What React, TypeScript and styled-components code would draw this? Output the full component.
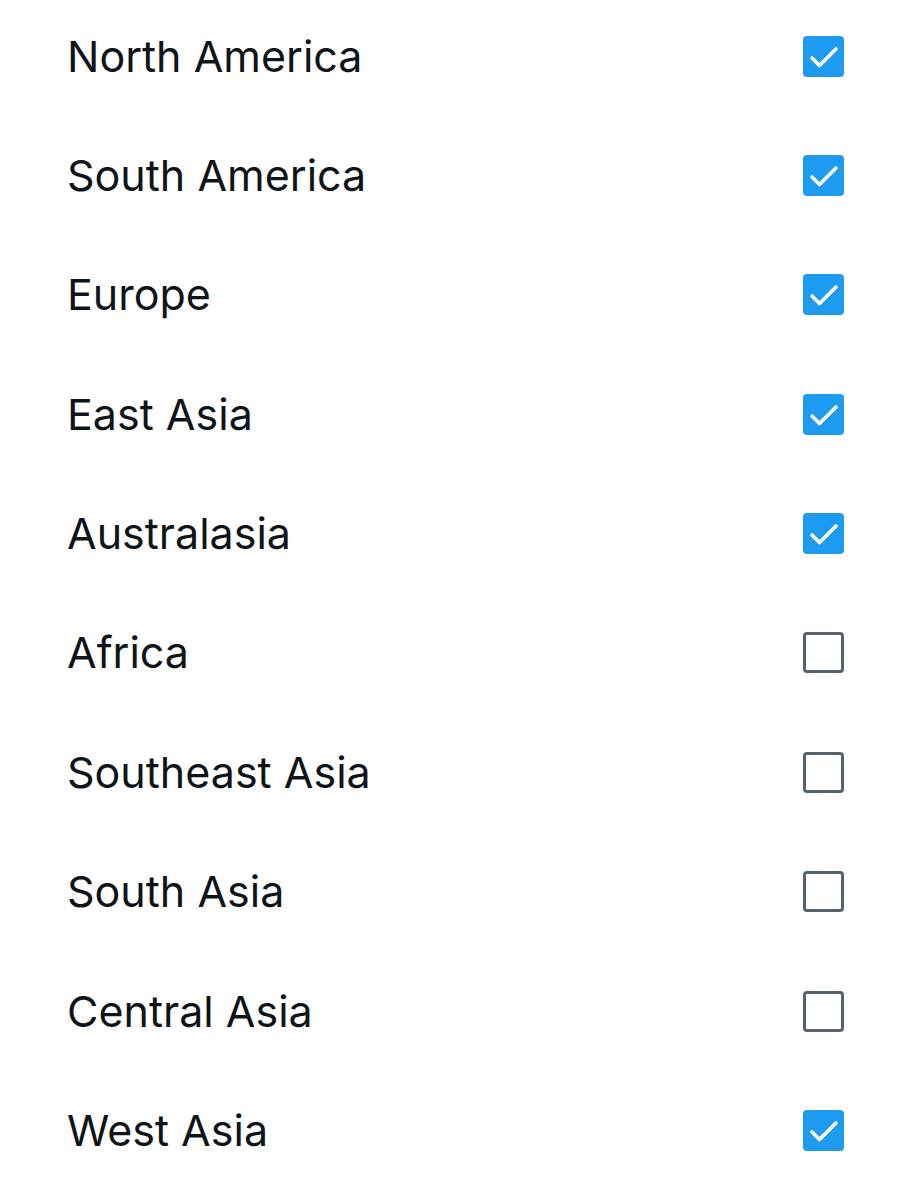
import styled, { createGlobalStyle } from "styled-components";

const regions = [
	{ name: "North America", checked: true },
	{ name: "South America", checked: true },
	{ name: "Europe", checked: true },
	{ name: "East Asia", checked: true },
	{ name: "Australasia", checked: true },
	{ name: "Africa", checked: false },
	{ name: "Southeast Asia", checked: false },
	{ name: "South Asia", checked: false },
	{ name: "Central Asia", checked: false },
	{ name: "West Asia", checked: true },
];

const GlobalStyle = createGlobalStyle`
	body {
		margin: 0;
		background: #ffffff;
		font-family: Inter, "Noto Sans", sans-serif;
		overflow: hidden;
	}
`;

const List = styled.ul`
	list-style: none;
	margin: -3.7px 0 0;
	padding: 0 69px 0 67px;
`;

const Row = styled.li`
	height: 119.4px;
	display: flex;
	align-items: center;
	justify-content: space-between;
`;

const Label = styled.span`
	font-size: 43px;
	color: #0f1419;
	line-height: 1;
`;

const Box = styled.span<{ $checked: boolean }>`
	width: 41px;
	height: 41px;
	box-sizing: border-box;
	border-radius: 4px;
	display: flex;
	align-items: center;
	justify-content: center;
	background: ${({ $checked }) => ($checked ? "#1d9bf0" : "transparent")};
	border: ${({ $checked }) => ($checked ? "none" : "3px solid #536471")};
`;

const Check = () => (
	<svg width="41" height="41" viewBox="0 0 41 41" fill="none">
		<path
			d="M9 22L16.5 29.5L33 13"
			stroke="#ffffff"
			strokeWidth="3.6"
			strokeLinecap="round"
			strokeLinejoin="round"
		/>
	</svg>
);

const App = () => {
	return (
		<>
			<GlobalStyle />
			<List>
				{regions.map((r) => (
					<Row key={r.name}>
						<Label>{r.name}</Label>
						<Box $checked={r.checked}>{r.checked && <Check />}</Box>
					</Row>
				))}
			</List>
		</>
	);
};

export default App;
